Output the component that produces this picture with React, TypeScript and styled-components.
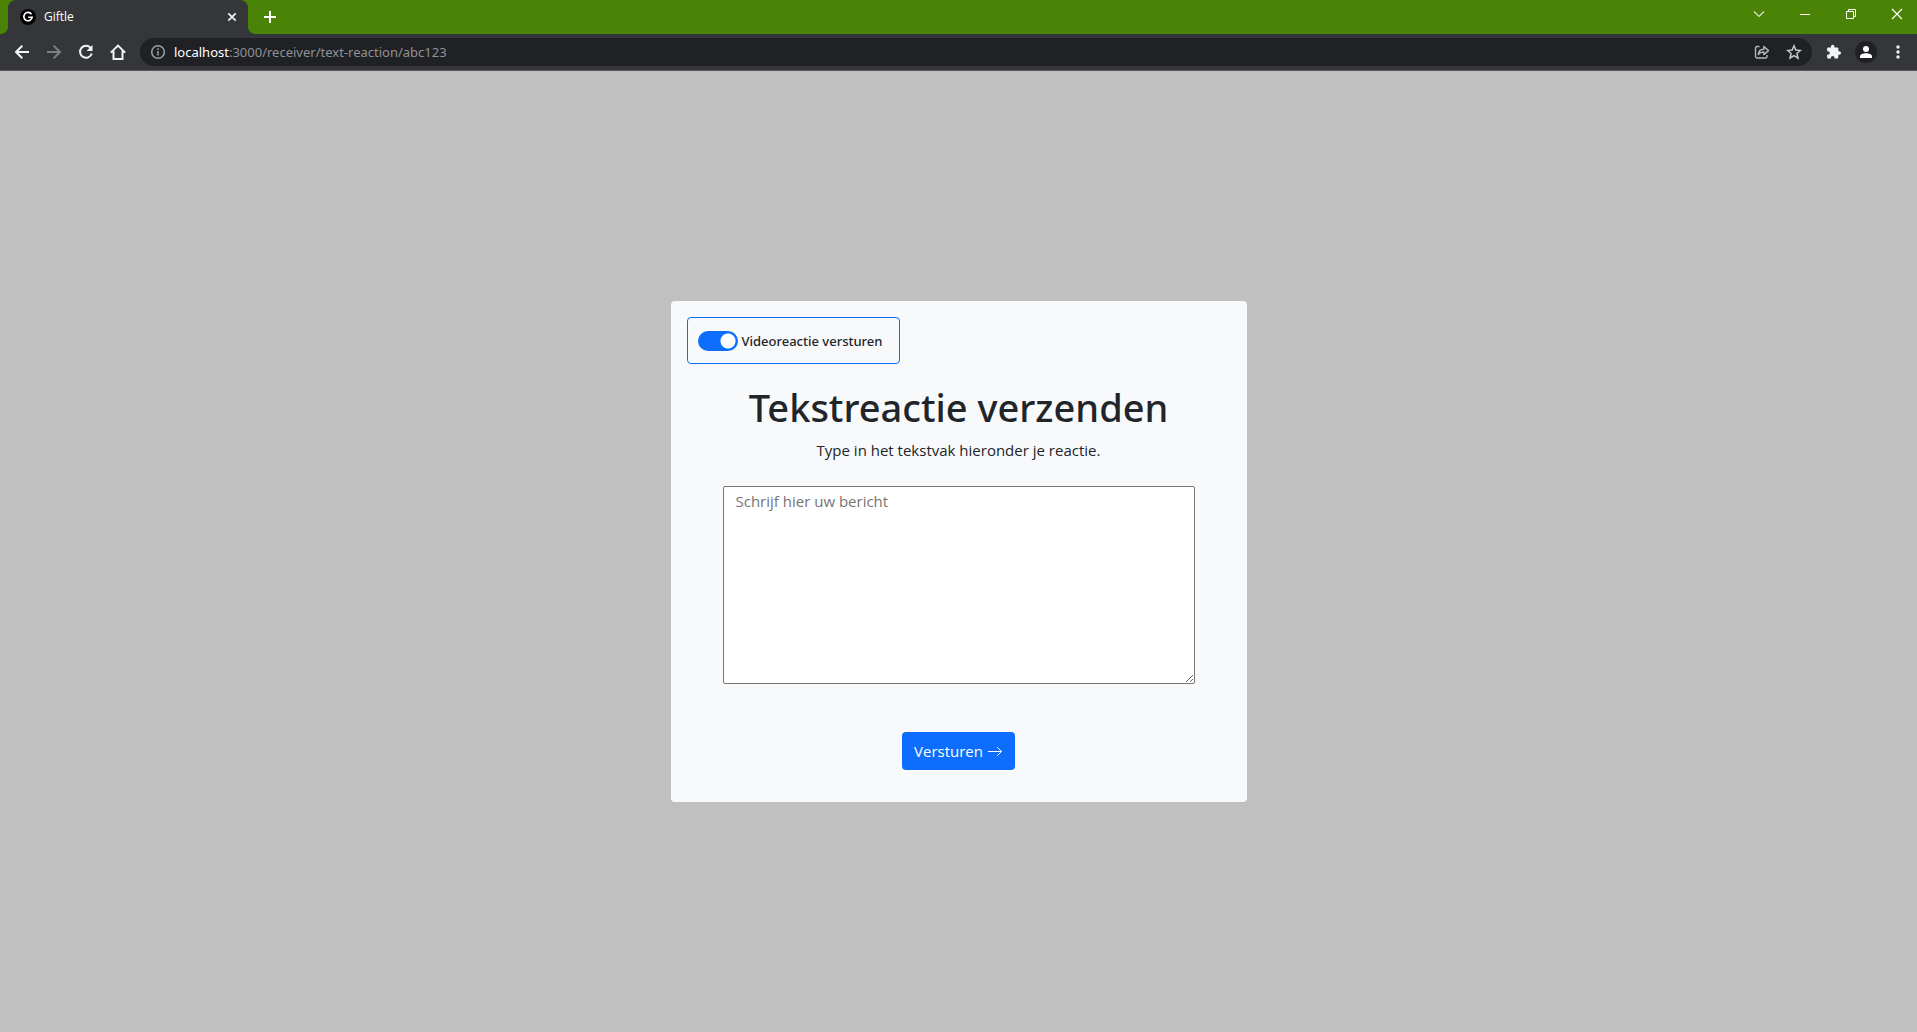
import React, { useState } from "react";
import styled, { createGlobalStyle } from "styled-components";

const ui = `"Segoe UI", "Open Sans", "Noto Sans", sans-serif`;
const uiMedium = `"Segoe UI", "Noto Sans", "Open Sans", sans-serif`;

const GlobalStyle = createGlobalStyle`
  *, *::before, *::after { box-sizing: border-box; }
  html, body, #root { height: 100%; }
  body { margin: 0; font-family: ${ui}; color: #212529; }
  button, input, textarea { font-family: inherit; }
`;

const Window = styled.div`
  display: flex;
  flex-direction: column;
  min-height: 100%;
`;

const TabStrip = styled.header`
  display: flex;
  align-items: stretch;
  height: 34px;
  padding-left: 8px;
  overflow: hidden;
  background: #4a8305;
`;

const Tab = styled.div`
  position: relative;
  display: flex;
  align-items: center;
  gap: 8px;
  width: 240px;
  padding: 0 8px 0 12px;
  border-radius: 8px 8px 0 0;
  background: #35363a;
  color: #ffffff;
  font-size: 12px;
  line-height: 16px;

  &::before,
  &::after {
    content: "";
    position: absolute;
    bottom: 0;
    width: 8px;
    height: 8px;
  }
  &::before {
    right: 100%;
    background: radial-gradient(circle at 0 0, transparent 8px, #35363a 8px);
  }
  &::after {
    left: 100%;
    background: radial-gradient(circle at 100% 0, transparent 8px, #35363a 8px);
  }
`;

const Favicon = styled.span`
  display: grid;
  place-items: center;
  width: 16px;
  height: 16px;
  border-radius: 50%;
  background: #000000;
`;

const TabTitle = styled.span`
  flex: 1;
`;

const IconButton = styled.button<{ $w: number; $h: number; $color?: string }>`
  display: grid;
  place-items: center;
  flex: none;
  width: ${(p) => p.$w}px;
  height: ${(p) => p.$h}px;
  padding: 0;
  border: 0;
  background: transparent;
  color: ${(p) => p.$color ?? "#f1f3f4"};
`;

const NewTab = styled.div`
  display: flex;
  align-items: center;
  padding-left: 8px;
`;

const WindowControls = styled.div`
  display: flex;
  margin-left: auto;
  margin-right: -3px;
`;

const Toolbar = styled.nav`
  display: flex;
  align-items: center;
  height: 37px;
  padding: 0 3px 0 6px;
  border-bottom: 1px solid #5b5a5f;
  background: #35363a;
`;

const AddressBar = styled.div`
  display: flex;
  align-items: center;
  flex: 1;
  height: 28px;
  margin: 0 6px;
  padding: 0 2px 0 10px;
  border-radius: 14px;
  background: #202124;
  color: #9aa0a6;
  font-size: 13px;
`;

const Host = styled.label`
  margin-left: 8px;
  color: #ffffff;
  font-family: ${uiMedium};
`;

const Address = styled.input`
  flex: 1;
  min-width: 0;
  padding: 0;
  border: 0;
  outline: 0;
  background: transparent;
  color: #8f9195;
  font-family: ${uiMedium};
  font-size: 13px;
`;

const Avatar = styled.span`
  display: grid;
  place-items: center;
  width: 22px;
  height: 22px;
  border-radius: 50%;
  background: #202124;
`;

const Page = styled.main`
  display: flex;
  flex: 1;
  align-items: center;
  justify-content: center;
  background: #c0c0c0;
`;

const Card = styled.form`
  width: 576px;
  max-width: 100%;
  padding: 16px 16px 32px;
  border-radius: 4px;
  background: #f8f9fb;
`;

const ModeSwitch = styled.label`
  display: inline-flex;
  align-items: center;
  gap: 4px;
  height: 47px;
  padding: 0 17px 0 10px;
  border: 1px solid #0d6efd;
  border-radius: 4px;
  font-family: ${uiMedium};
  font-size: 13px;
  font-weight: 500;
`;

const Switch = styled.input`
  appearance: none;
  width: 40px;
  height: 20px;
  margin: 0;
  border-radius: 10px;
  background: radial-gradient(circle at 10px 50%, #ffffff 7px, #adb5bd 8px);

  &:checked {
    background: radial-gradient(circle at 30px 50%, #ffffff 7px, #0d6efd 8px);
  }
`;

const Fields = styled.div`
  display: flex;
  flex-direction: column;
  align-items: center;
  padding: 19px 36px 0;
`;

const Title = styled.h1`
  margin: 0 0 7px;
  font-family: ${uiMedium};
  font-size: 38px;
  font-weight: 500;
  line-height: 48px;
  white-space: nowrap;
`;

const Intro = styled.p`
  margin: 0 0 24px;
  font-size: 15px;
  line-height: 24px;
`;

const Message = styled.textarea`
  width: 100%;
  height: 198px;
  margin-bottom: 48px;
  padding: 2px 12px;
  border: 1px solid #767676;
  border-radius: 2px;
  background: #ffffff;
  color: #212529;
  font-size: 15px;
  line-height: 24px;

  &::placeholder {
    color: #757575;
  }
`;

const SubmitButton = styled.button`
  display: flex;
  align-items: center;
  gap: 4px;
  height: 38px;
  padding: 0 12px;
  border: 0;
  border-radius: 4px;
  background: #0d6efd;
  color: #ffffff;
  font-size: 15px;
  line-height: 24px;
`;

type IconProps = { size?: number; w?: number; children: React.ReactNode };
const Icon = ({ size = 16, w = 2, children }: IconProps) => (
  <svg width={size} height={size} viewBox={`0 0 ${size} ${size}`} fill="none" stroke="currentColor" strokeWidth={w} aria-hidden="true">
    {children}
  </svg>
);

export default function App() {
  const [video, setVideo] = useState(true);
  const [path, setPath] = useState(":3000/receiver/text-reaction/abc123");

  return (
    <Window>
      <GlobalStyle />
      <TabStrip>
        <Tab>
          <Favicon>
            <Icon size={12} w={1.6}>
              <path d="M9.5 3.2A4.2 4.2 0 1 0 10.2 6.2H6.2" />
            </Icon>
          </Favicon>
          <TabTitle>Giftle</TabTitle>
          <IconButton $w={16} $h={16} aria-label="Close tab">
            <Icon w={1.7}><path d="M4.3 4.3l7.4 7.4M11.7 4.3l-7.4 7.4" /></Icon>
          </IconButton>
        </Tab>
        <NewTab>
          <IconButton $w={28} $h={28} $color="#ffffff" aria-label="New tab">
            <Icon><path d="M8 2v12M2 8h12" /></Icon>
          </IconButton>
        </NewTab>
        <WindowControls>
          <IconButton $w={46} $h={28} $color="#dfe9d2" aria-label="Search tabs">
            <Icon w={1.2}><path d="M3 5.5l5 5 5-5" /></Icon>
          </IconButton>
          <IconButton $w={46} $h={28} $color="#ffffff" aria-label="Minimize">
            <Icon w={1}><path d="M3 8.5h10" /></Icon>
          </IconButton>
          <IconButton $w={46} $h={28} $color="#ffffff" aria-label="Restore">
            <Icon w={1}><path d="M3.5 5.5h7v7h-7zM5.5 5.5v-2h7v7h-2" /></Icon>
          </IconButton>
          <IconButton $w={46} $h={28} $color="#ffffff" aria-label="Close">
            <Icon w={1.2}><path d="M3 3l10 10M13 3L3 13" /></Icon>
          </IconButton>
        </WindowControls>
      </TabStrip>

      <Toolbar aria-label="Browser">
        <IconButton $w={32} $h={28} aria-label="Back">
          <Icon><path d="M15 8H2.5M8.3 1.7L2 8l6.3 6.3" /></Icon>
        </IconButton>
        <IconButton $w={32} $h={28} $color="#7d7e81" aria-label="Forward">
          <Icon><path d="M1 8h12.500M7.700 1.700L14 8l-6.300 6.300" /></Icon>
        </IconButton>
        <IconButton $w={32} $h={28} aria-label="Reload">
          <Icon>
            <path d="M12.900 4.200A6 6 0 1 0 13.800 9.500" />
            <path d="M14.500 1v6h-6z" fill="currentColor" stroke="none" />
          </Icon>
        </IconButton>
        <IconButton $w={32} $h={28} aria-label="Home">
          <Icon><path d="M0.800 8.600L8 1.600l7.200 7M3.500 7v8h9V7" /></Icon>
        </IconButton>
        <AddressBar>
          <Icon w={1.5}>
            <circle cx="8" cy="8" r="6.300" />
            <path d="M8 7v4.500M8 4.300v1.600" />
          </Icon>
          <Host htmlFor="address">localhost</Host>
          <Address id="address" value={path} onChange={(e) => setPath(e.target.value)} />
          <IconButton $w={32} $h={28} $color="#b4b6b9" aria-label="Share">
            <Icon w={1.4}>
              <path d="M5.500 2.500H3A1.500 1.500 0 0 0 1.500 4v8.500A1.500 1.500 0 0 0 3 14h8.500a1.500 1.500 0 0 0 1.500-1.500V11" />
              <path d="M4.300 10.500C4.500 7 6.500 5.300 9.800 5.200V2.500L14.500 6.600 9.800 10.600V8C7.500 7.900 5.700 8.700 4.300 10.500z" strokeLinejoin="round" />
            </Icon>
          </IconButton>
          <IconButton $w={32} $h={28} $color="#c6c8ca" aria-label="Bookmark">
            <Icon w={1.5}>
              <path d="M8 1.800l1.800 4.300 4.600.4-3.500 3 1.100 4.600L8 11.700l-4 2.400 1.100-4.600-3.500-3 4.600-.4z" />
            </Icon>
          </IconButton>
        </AddressBar>
        <IconButton $w={32} $h={28} aria-label="Extensions">
          <Icon>
            <path
              d="M13.300 7.300h-.9V4.700c0-.7-.6-1.300-1.300-1.300H8.400v-.9a1.700 1.700 0 0 0-3.400 0v.9H2.400c-.7 0-1.300.6-1.300 1.300v2.500H2a1.800 1.800 0 0 1 0 3.600h-.9v2.500c0 .7.600 1.300 1.300 1.300h2.500v-.9a1.800 1.800 0 0 1 3.600 0v.9H11c.7 0 1.300-.6 1.300-1.300v-2.600h1a1.700 1.700 0 0 0 0-3.400z"
              fill="currentColor"
              stroke="none"
            />
          </Icon>
        </IconButton>
        <IconButton $w={32} $h={28} $color="#ffffff" aria-label="Profile">
          <Avatar>
            <Icon>
              <g fill="currentColor" stroke="none">
                <circle cx="8" cy="5" r="3" />
                <path d="M2 14v-1.500C2 10.300 5 9.300 8 9.300s6 1 6 3.200V14z" />
              </g>
            </Icon>
          </Avatar>
        </IconButton>
        <IconButton $w={32} $h={28} aria-label="Menu">
          <Icon>
            <g fill="currentColor" stroke="none">
              <circle cx="8" cy="3" r="1.700" />
              <circle cx="8" cy="8" r="1.700" />
              <circle cx="8" cy="13" r="1.700" />
            </g>
          </Icon>
        </IconButton>
      </Toolbar>

      <Page>
        <Card onSubmit={(e) => e.preventDefault()}>
          <ModeSwitch htmlFor="video">
            <Switch id="video" type="checkbox" role="switch" checked={video} onChange={(e) => setVideo(e.target.checked)} />
            Videoreactie versturen
          </ModeSwitch>
          <Fields>
            <Title>Tekstreactie verzenden</Title>
            <Intro id="intro">Type in het tekstvak hieronder je reactie.</Intro>
            <Message aria-labelledby="intro" placeholder="Schrijf hier uw bericht" />
            <SubmitButton type="submit">
              Versturen
              <Icon w={1}><path d="M1.500 8.500h13M10.500 4.500l4 4-4 4" strokeLinecap="round" strokeLinejoin="round" /></Icon>
            </SubmitButton>
          </Fields>
        </Card>
      </Page>
    </Window>
  );
}
